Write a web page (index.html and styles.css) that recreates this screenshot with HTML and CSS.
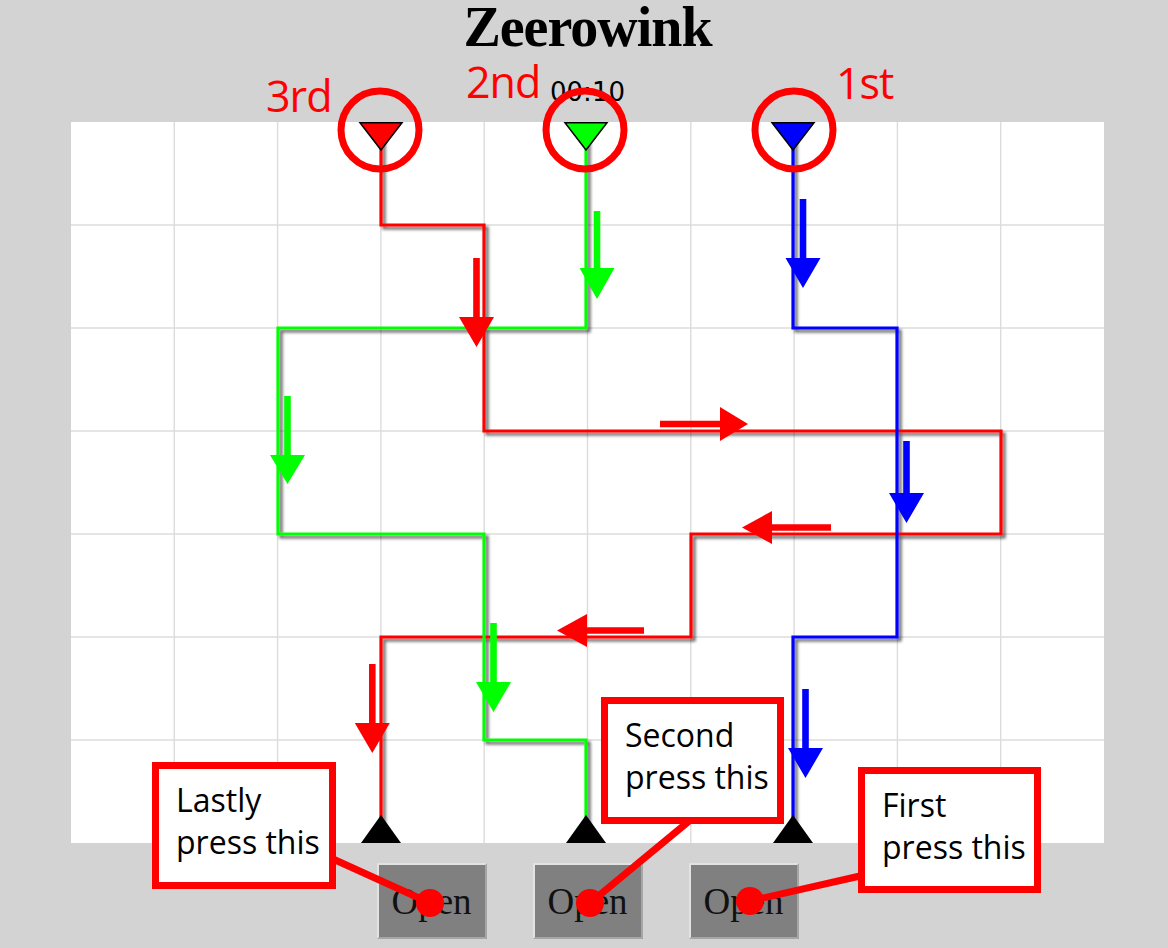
FILE: index.html
```html
<!DOCTYPE html>
<html lang="en">
<head>
<meta charset="utf-8">
<title>Zeerowink</title>
<link rel="stylesheet" href="styles.css">
</head>
<body>
<div class="page">
  <h1 class="title">Zeerowink</h1>
  <div class="timer">00:10</div>

  <svg class="board" width="1033" height="721" viewBox="0 0 1033 721" xmlns="http://www.w3.org/2000/svg">
    <defs>
      <filter id="shadow" x="-10%" y="-10%" width="120%" height="120%">
        <feDropShadow dx="3" dy="3" stdDeviation="1.6" flood-color="#000" flood-opacity="0.6"/>
      </filter>
    </defs>
    <rect x="0" y="0" width="1033" height="721" fill="#fff"/>
    <g stroke="#dcdcdc" stroke-width="1.4">
      <line x1="103.3" y1="0" x2="103.3" y2="721"/>
      <line x1="206.6" y1="0" x2="206.6" y2="721"/>
      <line x1="309.9" y1="0" x2="309.9" y2="721"/>
      <line x1="413.2" y1="0" x2="413.2" y2="721"/>
      <line x1="516.5" y1="0" x2="516.5" y2="721"/>
      <line x1="619.8" y1="0" x2="619.8" y2="721"/>
      <line x1="723.1" y1="0" x2="723.1" y2="721"/>
      <line x1="826.4" y1="0" x2="826.4" y2="721"/>
      <line x1="929.7" y1="0" x2="929.7" y2="721"/>
      <line x1="0" y1="103" x2="1033" y2="103"/>
      <line x1="0" y1="206" x2="1033" y2="206"/>
      <line x1="0" y1="309" x2="1033" y2="309"/>
      <line x1="0" y1="412" x2="1033" y2="412"/>
      <line x1="0" y1="515" x2="1033" y2="515"/>
      <line x1="0" y1="618" x2="1033" y2="618"/>
    </g>
    <g fill="none" stroke-width="3.2" stroke-linejoin="miter" filter="url(#shadow)">
      <polyline stroke="#ff0000" points="310,0 310,103 413,103 413,309 930,309 930,412 620,412 620,515 310,515 310,721"/>
      <polyline stroke="#00ff00" points="515,0 515,206 207,206 207,412 413,412 413,618 515,618 515,721"/>
      <polyline stroke="#0000ff" points="722,0 722,206 826,206 826,515 722,515 722,721"/>
    </g>
    <!-- direction arrows -->
    <g>
      <polygon fill="#ff0000" points="402.2,136 408.8,136 408.8,195 423,195 405.5,225 388,195 402.2,195"/>
      <polygon fill="#00ff00" points="522.7,89 529.3,89 529.3,146 543.5,146 526,177 508.5,146 522.7,146"/>
      <polygon fill="#0000ff" points="728.7,77 735.3,77 735.3,136 749.5,136 732,166 714.5,136 728.7,136"/>
      <polygon fill="#ff0000" points="589,298.7 649,298.7 649,285 677,302 649,319 649,305.3 589,305.3"/>
      <polygon fill="#0000ff" points="832.2,319 838.8,319 838.8,371 853,371 835.5,401 818,371 832.2,371"/>
      <polygon fill="#ff0000" points="760,402.2 701,402.2 701,389 671,405.5 701,422 701,408.8 760,408.8"/>
      <polygon fill="#00ff00" points="213.2,274 219.8,274 219.8,333 234,333 216.5,362 199,333 213.2,333"/>
      <polygon fill="#ff0000" points="573,505.2 516,505.2 516,492 486,508.5 516,525 516,511.8 573,511.8"/>
      <polygon fill="#00ff00" points="419.2,501 425.8,501 425.8,560 440,560 422.5,590 405,560 419.2,560"/>
      <polygon fill="#ff0000" points="298,542 304.6,542 304.6,601 318.8,601 301.3,631 283.8,601 298,601"/>
      <polygon fill="#0000ff" points="731.2,567 737.8,567 737.8,626 752,626 734.5,656 717,626 731.2,626"/>
    </g>
    <!-- start markers -->
    <g stroke="#000" stroke-width="1.5" stroke-linejoin="miter">
      <polygon fill="#ff0000" points="289,0.8 331,0.8 310,28"/>
      <polygon fill="#00ff00" points="494,0.8 536,0.8 515,28"/>
      <polygon fill="#0000ff" points="701,0.8 743,0.8 722,28"/>
    </g>
    <!-- end markers -->
    <g fill="#000">
      <polygon points="290,721 330,721 310,693"/>
      <polygon points="495,721 535,721 515,693"/>
      <polygon points="702,721 742,721 722,693"/>
    </g>
  </svg>

  <div class="controls">
    <button class="open-btn">Open</button>
    <button class="open-btn">Open</button>
    <button class="open-btn">Open</button>
  </div>

  <!-- tutorial annotations drawn over the game -->
  <svg class="marks" width="1168" height="948" viewBox="0 0 1168 948" xmlns="http://www.w3.org/2000/svg">
    <g fill="none" stroke="#ff0000" stroke-width="7">
      <circle cx="380" cy="130" r="39"/>
      <circle cx="585" cy="130" r="39"/>
      <circle cx="794" cy="130" r="39"/>
    </g>
    <g stroke="#ff0000" stroke-width="7" stroke-linecap="round">
      <line x1="333" y1="859" x2="430" y2="903"/>
      <line x1="688" y1="822" x2="590" y2="903"/>
      <line x1="860" y1="876" x2="750" y2="901"/>
    </g>
    <g fill="#ff0000">
      <circle cx="430" cy="903" r="14"/>
      <circle cx="590" cy="903" r="14"/>
      <circle cx="750" cy="901" r="14"/>
    </g>
  </svg>

  <span class="rank rank-3">3rd</span>
  <span class="rank rank-2">2nd</span>
  <span class="rank rank-1">1st</span>

  <div class="callout callout-last">Lastly<br>press this</div>
  <div class="callout callout-second">Second<br>press this</div>
  <div class="callout callout-first">First<br>press this</div>
</div>
</body>
</html>
```

FILE: styles.css
```css
html, body {
  margin: 0;
  padding: 0;
  background: #d3d3d3;
}

.page {
  position: relative;
  width: 1168px;
  height: 948px;
  box-sizing: border-box;
  padding-left: 7px;
  display: flex;
  flex-direction: column;
  align-items: center;
  overflow: hidden;
}

.title {
  margin: 0;
  font-family: "Liberation Serif", "DejaVu Serif", serif;
  font-weight: bold;
  font-size: 56px;
  line-height: 54px;
  letter-spacing: -1px;
  color: #000;
}

.timer {
  margin-top: 25px;
  font-family: "DejaVu Sans", sans-serif;
  font-size: 26px;
  line-height: 26px;
  color: #000;
}

.board {
  display: block;
  margin-top: 17px;
}

.controls {
  display: flex;
  gap: 46px;
  margin-top: 20px;
}

.open-btn {
  width: 110px;
  height: 76px;
  padding: 0;
  background: #808080;
  border: 2px solid;
  border-color: #e2e2e2 #a6a6a6 #a6a6a6 #e2e2e2;
  font-family: "Liberation Serif", serif;
  font-size: 37px;
  color: #111;
  line-height: 1;
}

.marks {
  position: absolute;
  left: 0;
  top: 0;
  pointer-events: none;
}

.rank {
  position: absolute;
  font-family: "Open Sans", "Noto Sans", sans-serif;
  font-size: 43px;
  line-height: 43px;
  letter-spacing: -1px;
  color: #ff0000;
}

.rank-3 { left: 266px; top: 74px; }
.rank-2 { left: 466px; top: 60px; }
.rank-1 { left: 836px; top: 61px; }

.callout {
  position: absolute;
  box-sizing: border-box;
  background: #fff;
  border: 7px solid #ff0000;
  padding: 10px 0 0 17px;
  font-family: "Open Sans", "Noto Sans", sans-serif;
  font-size: 32px;
  line-height: 42px;
  color: #000;
  white-space: nowrap;
}

.callout-last { left: 152px; top: 762px; width: 184px; height: 127px; }
.callout-second { left: 601px; top: 697px; width: 183px; height: 127px; }
.callout-first { left: 858px; top: 767px; width: 183px; height: 126px; }
```
